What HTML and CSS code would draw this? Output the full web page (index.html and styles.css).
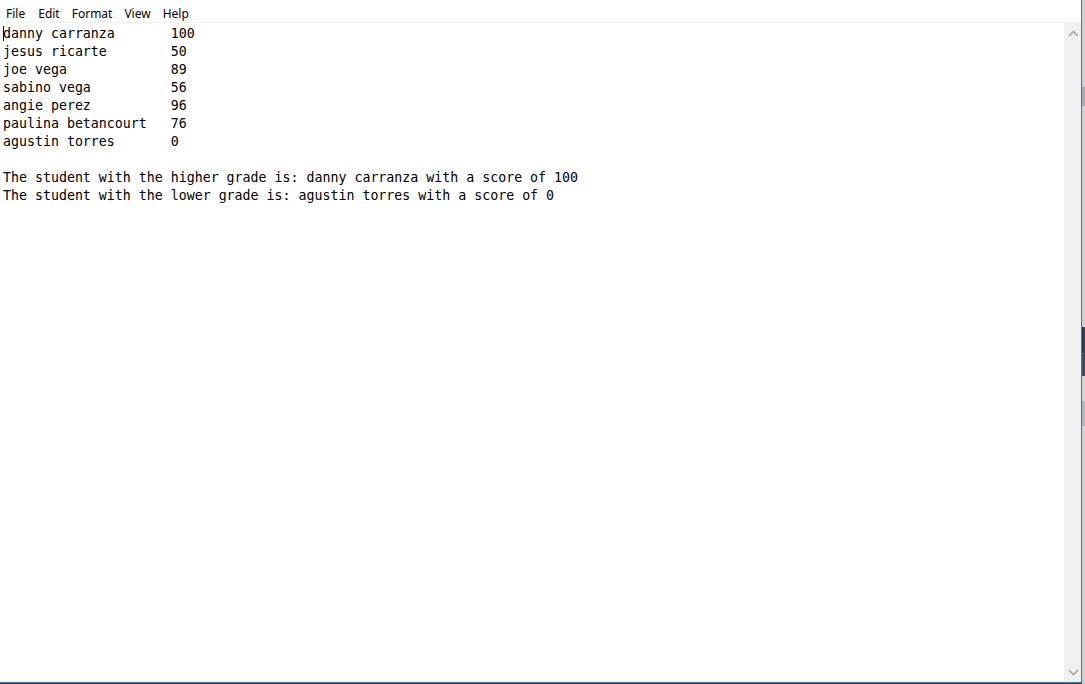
FILE: index.html
```html
<!DOCTYPE html>
<html>
<head>
<meta charset="utf-8">
<link rel="stylesheet" href="styles.css">
</head>
<body>
<div class="screen">
  <div class="window">
    <div class="menubar">
      <span class="menu m-file">File</span>
      <span class="menu m-edit">Edit</span>
      <span class="menu m-format">Format</span>
      <span class="menu m-view">View</span>
      <span class="menu m-help">Help</span>
    </div>
    <div class="editor-row">
      <div class="editor"><span class="caret"></span><pre class="text">danny carranza       100
jesus ricarte        50
joe vega             89
sabino vega          56
angie perez          96
paulina betancourt   76
agustin torres       0

The student with the higher grade is: danny carranza with a score of 100
The student with the lower grade is: agustin torres with a score of 0</pre></div>
      <div class="scrollbar">
        <svg class="arrow" width="11" height="7" viewBox="0 0 11 7"><path d="M1 6 L5.5 1.5 L10 6" fill="none" stroke="#a6a6a6" stroke-width="1.6"/></svg>
        <svg class="arrow" width="11" height="7" viewBox="0 0 11 7"><path d="M1 1 L5.5 5.5 L10 1" fill="none" stroke="#a6a6a6" stroke-width="1.6"/></svg>
      </div>
    </div>
  </div>
  <div class="backdrop">
    <div class="bd bd1"></div>
    <div class="bd bd2"></div>
    <div class="bd bd3"></div>
    <div class="bd bd4"></div>
    <div class="bd bd5"></div>
    <div class="bd bd6"></div>
    <div class="bd bd7"></div>
    <div class="bd bd8"></div>
  </div>
</div>
</body>
</html>
```
FILE: styles.css
```css
html, body {
  margin: 0;
  padding: 0;
  background: #3c3f46;
  overflow: hidden;
}
.screen {
  display: flex;
  width: 1085px;
  height: 684px;
}
.window {
  width: 1081px;
  height: 682px;
  border-right: 1px solid #1a82d6;
  border-bottom: 1px solid #1a82d6;
  display: flex;
  flex-direction: column;
  background: #fff;
}
.menubar {
  height: 22px;
  border-bottom: 1px solid #f0f0f0;
  display: flex;
  align-items: center;
  font-family: "Noto Sans", "Open Sans", sans-serif;
  font-size: 12px;
  color: #000;
  padding-left: 6px;
  box-sizing: content-box;
}
.menu { line-height: 22px; padding-top: 6px; }
.m-file { margin-right: 13px; }
.m-edit { margin-right: 12px; }
.m-format { margin-right: 12px; }
.m-view { margin-right: 12px; }
.editor-row {
  flex: 1;
  display: flex;
  min-height: 0;
}
.editor {
  flex: 1;
  position: relative;
  padding: 2px 0 0 3px;
}
.caret {
  position: absolute;
  left: 3px;
  top: 3px;
  width: 1px;
  height: 15px;
  background: #000;
}
.text {
  margin: 0;
  font-family: "DejaVu Sans Mono", "Liberation Mono", monospace;
  font-size: 13.28px;
  line-height: 18px;
  color: #000;
  white-space: pre;
}
.scrollbar {
  width: 16px;
  background: #f0f0f0;
  display: flex;
  flex-direction: column;
  justify-content: space-between;
  align-items: center;
  padding: 7px 0 6px 1px;
}
.backdrop {
  width: 3px;
  height: 684px;
  display: flex;
  flex-direction: column;
  background: #d0d0d0;
}
.bd { width: 3px; }
.bd1 { height: 87px; background: #d0d0d0; }
.bd2 { height: 19px; background: #a7a9b0; }
.bd3 { height: 221px; background: #d0d0d0; }
.bd4 { height: 26px; background: #2c3a56; }
.bd5 { height: 1px; background: #5a6680; }
.bd6 { height: 22px; background: #3d4a67; }
.bd7 { height: 25px; background: #d4d4d4; }
.bd8 { height: 25px; background: #b2b5bb; }
```
